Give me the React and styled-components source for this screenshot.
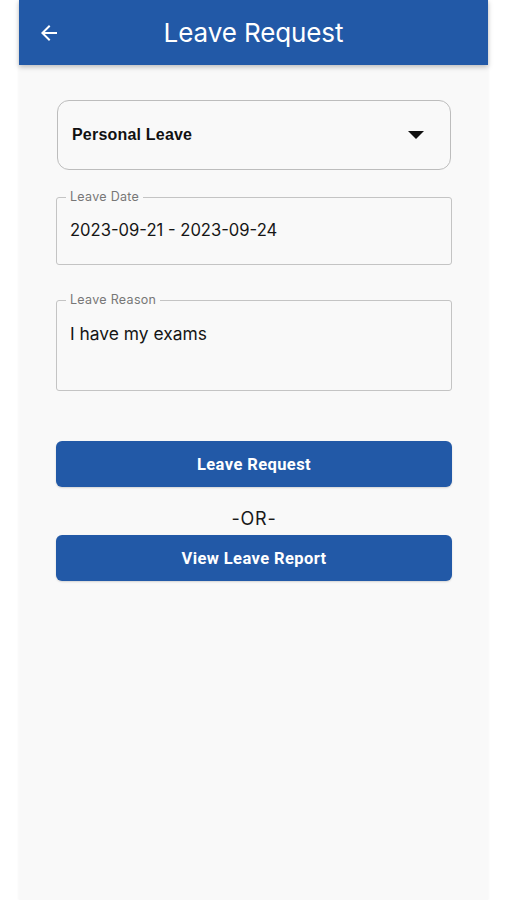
import React from 'react';
import styled, { createGlobalStyle } from 'styled-components';

const GlobalStyle = createGlobalStyle`
    html, body {
        margin: 0;
        padding: 0;
        background: #ffffff;
    }
    * {
        box-sizing: border-box;
    }
`;

const BLUE = '#2259a7';

const Screen = styled.div`
    width: 469px;
    min-height: 900px;
    margin-left: 19px;
    background: #f9f9f9;
    box-shadow: -1px 0 2px rgba(0, 0, 0, 0.03), 1px 0 2px rgba(0, 0, 0, 0.03);
    display: flex;
    flex-direction: column;
`;

const Header = styled.header`
    height: 65px;
    background: ${BLUE};
    box-shadow: 0 2px 5px rgba(0, 0, 0, 0.25);
    display: flex;
    align-items: center;
    padding: 0 0 0 18px;
    position: relative;
    z-index: 1;
`;

const BackButton = styled.button`
    width: 24px;
    height: 24px;
    padding: 0;
    border: none;
    background: none;
    color: #ffffff;
    display: flex;
    align-items: center;
    justify-content: center;
`;

const Title = styled.h1`
    flex: 1;
    margin: 0;
    padding-right: 42px;
    text-align: center;
    color: #ffffff;
    font-family: Inter, 'Open Sans', sans-serif;
    font-weight: 400;
    font-size: 26px;
    letter-spacing: -0.1px;
`;

const Content = styled.main`
    display: flex;
    flex-direction: column;
    padding: 35px 36px 0 37px;
`;

const Select = styled.div`
    height: 70px;
    margin: 0 1px;
    border: 1px solid #bdbdbd;
    border-radius: 12px;
    display: flex;
    align-items: center;
    justify-content: space-between;
    padding: 0 26px 0 14px;
    font-family: 'Liberation Sans', Arial, sans-serif;
    font-weight: 700;
    font-size: 16px;
    letter-spacing: 0.2px;
    color: #111111;
`;

const Caret = styled.span`
    width: 0;
    height: 0;
    border-left: 8px solid transparent;
    border-right: 8px solid transparent;
    border-top: 8px solid #111111;
`;

const Field = styled.div`
    position: relative;
    margin-top: ${(p) => p.$gap}px;
    height: ${(p) => p.$height}px;
    border: 1px solid #c4c4c4;
    border-radius: 3px;
    padding: ${(p) => p.$padTop}px 13px 0;
    font-family: Inter, 'Open Sans', sans-serif;
    font-size: ${(p) => p.$size}px;
    color: #151515;
`;

const FieldLabel = styled.span`
    position: absolute;
    top: -8px;
    left: 9px;
    padding: 0 4px;
    background: #f9f9f9;
    font-family: Inter, 'Open Sans', sans-serif;
    font-size: 12.5px;
    letter-spacing: 0.3px;
    line-height: 14px;
    color: #777777;
`;

const Button = styled.button`
    height: 46px;
    width: 100%;
    border: none;
    border-radius: 6px;
    background: ${BLUE};
    color: #ffffff;
    font-family: Roboto, 'Liberation Sans', sans-serif;
    font-weight: 700;
    font-size: 16.5px;
    letter-spacing: 0.4px;
    margin-top: ${(p) => p.$gap || 0}px;
    box-shadow: 0 1px 2px rgba(0, 0, 0, 0.15);
`;

const Divider = styled.div`
    height: 48px;
    padding-top: 14px;
    display: flex;
    align-items: center;
    justify-content: center;
    font-family: Inter, 'Open Sans', sans-serif;
    font-size: 18px;
    letter-spacing: 0.8px;
    color: #1a1a1a;
`;

const BackArrow = () => (
    <svg width='24' height='24' viewBox='0 0 24 24' fill='currentColor'>
        <path d='M20 11H7.83l5.59-5.59L12 4l-8 8 8 8 1.41-1.41L7.83 13H20v-2z' />
    </svg>
);

export default function App() {
    return (
        <>
            <GlobalStyle />
            <Screen>
                <Header>
                    <BackButton aria-label='Back'>
                        <BackArrow />
                    </BackButton>
                    <Title>Leave Request</Title>
                </Header>
                <Content>
                    <Select>
                        <span>Personal Leave</span>
                        <Caret />
                    </Select>
                    <Field $gap={27} $height={68} $padTop={22} $size={16.6}>
                        <FieldLabel>Leave Date</FieldLabel>
                        2023-09-21 - 2023-09-24
                    </Field>
                    <Field $gap={35} $height={91} $padTop={22} $size={17.4}>
                        <FieldLabel>Leave Reason</FieldLabel>
                        I have my exams
                    </Field>
                    <Button $gap={50}>Leave Request</Button>
                    <Divider>-OR-</Divider>
                    <Button>View Leave Report</Button>
                </Content>
            </Screen>
        </>
    );
}
